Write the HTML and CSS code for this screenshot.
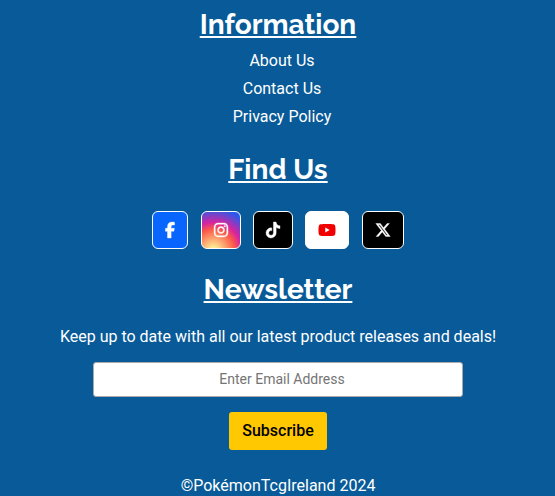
FILE: index.html
```html
<!DOCTYPE html>
<html lang="en">
<head>
<meta charset="utf-8">
<title>PokémonTcgIreland</title>
<link rel="stylesheet" href="styles.css">
</head>
<body>
<footer class="footer">
  <section class="info">
    <h2 class="title">Information</h2>
    <ul class="links">
      <li><a>About Us</a></li>
      <li><a>Contact Us</a></li>
      <li><a>Privacy Policy</a></li>
    </ul>
  </section>
  <section class="find">
    <h2 class="title">Find Us</h2>
    <div class="social">
      <a class="btn facebook" aria-label="Facebook"><svg viewBox="0 0 320 512" width="10" height="16"><path d="M80 299.300V512H196V299.300h86.500l18-97.800H196V166.900c0-51.700 20.300-71.500 72.700-71.500c16.300 0 29.400 .4 37 1.200V7.900C291.400 4 256.400 0 236.200 0C129.300 0 80 50.500 80 159.400v42.100H14v97.800H80z"/></svg></a>
      <a class="btn instagram" aria-label="Instagram"><svg viewBox="0 0 448 512" width="14" height="16"><path d="M224.100 141c-63.600 0-114.900 51.300-114.900 114.900s51.300 114.900 114.900 114.900S339 319.500 339 255.900 287.700 141 224.100 141zm0 189.600c-41.100 0-74.700-33.500-74.700-74.700s33.500-74.700 74.700-74.700 74.700 33.500 74.700 74.700-33.600 74.700-74.700 74.700zm146.400-194.300c0 14.900-12 26.800-26.800 26.800-14.900 0-26.800-12-26.800-26.800s12-26.800 26.800-26.800 26.800 12 26.800 26.800zm76.100 27.200c-1.700-35.900-9.900-67.700-36.200-93.900-26.200-26.200-58-34.400-93.900-36.200-37-2.100-147.900-2.100-184.900 0-35.800 1.700-67.600 9.900-93.900 36.100s-34.400 58-36.200 93.900c-2.100 37-2.100 147.900 0 184.900 1.700 35.900 9.900 67.700 36.200 93.900s58 34.400 93.900 36.200c37 2.100 147.900 2.100 184.900 0 35.900-1.700 67.700-9.900 93.900-36.200 26.200-26.200 34.400-58 36.200-93.900 2.100-37 2.100-147.800 0-184.800zM398.800 388c-7.800 19.600-22.900 34.700-42.600 42.600-29.500 11.700-99.500 9-132.100 9s-102.700 2.600-132.100-9c-19.600-7.800-34.700-22.900-42.600-42.600-11.700-29.500-9-99.500-9-132.100s-2.600-102.700 9-132.100c7.800-19.600 22.900-34.700 42.600-42.600 29.500-11.700 99.500-9 132.100-9s102.700-2.600 132.100 9c19.600 7.800 34.700 22.900 42.600 42.600 11.700 29.500 9 99.500 9 132.100s2.700 102.700-9 132.100z"/></svg></a>
      <a class="btn tiktok" aria-label="TikTok"><svg viewBox="0 0 448 512" width="14" height="16"><path d="M448 209.900a210.100 210.100 0 0 1-122.800-39.300V349.400A162.600 162.600 0 1 1 185 188.300V278.200a74.600 74.600 0 1 0 52.200 71.200V0h88a121.200 121.200 0 0 0 1.900 22.200A122.200 122.200 0 0 0 381 102.400a121.400 121.400 0 0 0 67 20.100z"/></svg></a>
      <a class="btn youtube" aria-label="YouTube"><svg viewBox="0 0 576 512" width="18" height="16"><path d="M549.700 124.100c-6.300-23.700-24.800-42.300-48.300-48.600C458.800 64 288 64 288 64S117.200 64 74.600 75.500c-23.500 6.300-42 24.900-48.300 48.600-11.400 42.900-11.400 132.300-11.400 132.300s0 89.400 11.400 132.300c6.300 23.700 24.800 41.500 48.300 47.800C117.200 448 288 448 288 448s170.800 0 213.400-11.500c23.500-6.300 42-24.200 48.300-47.800 11.400-42.900 11.400-132.300 11.400-132.300s0-89.400-11.400-132.300zM232.200 337.600V175.200l142.700 81.200-142.700 81.200z"/></svg></a>
      <a class="btn twitter" aria-label="X"><svg viewBox="0 0 512 512" width="16" height="16"><path d="M389.200 48h70.600L305.600 224.200 487 464H345L233.700 318.600 106.500 464H35.800L200.700 275.500 26.800 48H172.400L272.900 180.900 389.200 48zM364.400 421.800h39.100L151.100 88h-42L364.400 421.800z"/></svg></a>
    </div>
  </section>
  <section class="newsletter">
    <h2 class="title">Newsletter</h2>
    <p class="lead">Keep up to date with all our latest product releases and deals!</p>
    <input class="email" type="email" placeholder="Enter Email Address">
    <button class="subscribe" type="button">Subscribe</button>
  </section>
  <p class="copyright">©PokémonTcgIreland 2024</p>
</footer>
</body>
</html>
```
FILE: styles.css
```css
* { box-sizing: border-box; }
html { overflow: hidden; }
body {
  margin: 0;
  background: #085a98;
  color: #fff;
  font: 400 16px/24px Roboto, sans-serif;
}
.footer {
  height: 496px;
  padding: 8px 0 0 1px;
  overflow: hidden;
  text-align: center;
}
.title {
  margin: 0;
  font: 700 28px/34px Raleway, Lato, sans-serif;
  text-decoration: underline;
  text-decoration-thickness: 2px;
  text-underline-offset: 2px;
  text-decoration-skip-ink: none;
}
.links {
  margin: 5px 0 0;
  padding: 0 0 0 8px;
  list-style: none;
}
.links li { height: 28px; line-height: 28px; }
.find { margin-top: 22px; }
.social {
  display: flex;
  justify-content: center;
  gap: 12.400px;
  margin-top: 24px;
}
.btn {
  display: flex;
  align-items: center;
  height: 38px;
  padding: 0 12px;
  border: 1px solid #fff;
  border-radius: 6px;
}
.btn svg {
  display: block;
  overflow: visible;
  fill: #fff;
  stroke: #fff;
  stroke-width: 12;
}
.facebook { background: #0866ff; }
.instagram {
  background: radial-gradient(circle at 30% 107%, #fdf497 0%, #fdf497 5%, #fd5949 45%, #d6249f 60%, #285aeb 90%);
}
.tiktok, .twitter { background: #000; }
.youtube { background: #fff; }
.btn.youtube svg { fill: #f00000; stroke: none; }
.newsletter {
  display: flex;
  flex-direction: column;
  align-items: center;
  margin-top: 24px;
}
.lead { margin: 18px 0 13px; }
.email {
  width: 370px;
  height: 35px;
  padding: 0 8px 2px 16px;
  border: 1px solid #aaa;
  border-radius: 3px;
  background: #fff;
  font: 400 14px Roboto, sans-serif;
  text-align: center;
}
.email::placeholder { color: #757575; }
.subscribe {
  width: 98px;
  height: 38px;
  margin-top: 15px;
  padding: 0;
  border: 0;
  border-radius: 3px;
  background: #ffc800;
  color: #000;
  font: 500 16px/24px Roboto, sans-serif;
}
.copyright { margin: 24px 0 0; }
```
